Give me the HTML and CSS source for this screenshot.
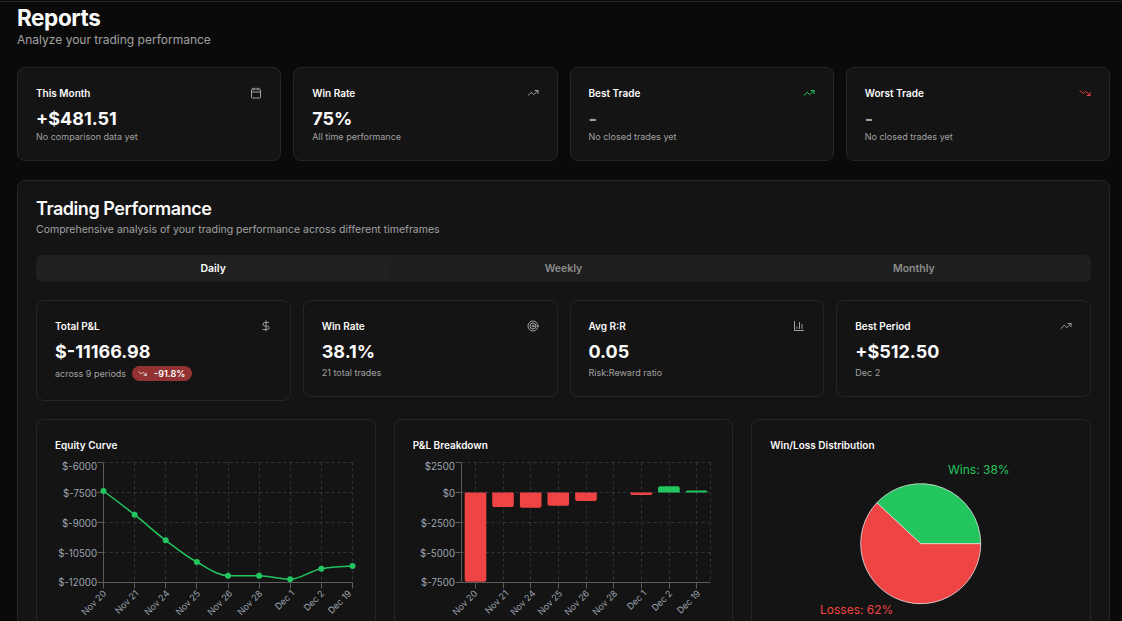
FILE: index.html
```html
<!DOCTYPE html>
<html lang="en">
<head>
<meta charset="utf-8">
<title>Reports</title>
<link rel="stylesheet" href="styles.css">
</head>
<body>
<div class="topline"></div>
<main class="page">
  <header class="head">
    <h1>Reports</h1>
    <p>Analyze your trading performance</p>
  </header>

  <section class="summary">
    <article class="stat">
      <div class="stat-top"><span class="stat-label">This Month</span>
        <svg class="ico muted" viewBox="0 0 24 24"><path d="M8 2v4M16 2v4"/><rect x="3" y="4" width="18" height="18" rx="2"/><path d="M3 10h18"/></svg></div>
      <div class="stat-value">+$481.51</div>
      <div class="stat-note">No comparison data yet</div>
    </article>
    <article class="stat">
      <div class="stat-top"><span class="stat-label">Win Rate</span>
        <svg class="ico muted" viewBox="0 0 24 24"><path d="M22 7l-8.5 8.5-5-5L2 17"/><path d="M16 7h6v6"/></svg></div>
      <div class="stat-value">75%</div>
      <div class="stat-note">All time performance</div>
    </article>
    <article class="stat">
      <div class="stat-top"><span class="stat-label">Best Trade</span>
        <svg class="ico up" viewBox="0 0 24 24"><path d="M22 7l-8.5 8.5-5-5L2 17"/><path d="M16 7h6v6"/></svg></div>
      <div class="stat-value dash">-</div>
      <div class="stat-note">No closed trades yet</div>
    </article>
    <article class="stat">
      <div class="stat-top"><span class="stat-label">Worst Trade</span>
        <svg class="ico down" viewBox="0 0 24 24"><path d="M22 17l-8.5-8.5-5 5L2 7"/><path d="M16 17h6v-6"/></svg></div>
      <div class="stat-value dash">-</div>
      <div class="stat-note">No closed trades yet</div>
    </article>
  </section>

  <section class="panel">
    <h2>Trading Performance</h2>
    <p class="panel-sub">Comprehensive analysis of your trading performance across different timeframes</p>

    <nav class="tabs">
      <span class="tab active">Daily</span>
      <span class="tab">Weekly</span>
      <span class="tab">Monthly</span>
    </nav>

    <div class="kpis">
      <article class="stat">
        <div class="stat-top"><span class="stat-label">Total P&amp;L</span>
          <svg class="ico muted" viewBox="0 0 24 24"><path d="M12 2v20"/><path d="M17 5H9.5a3.5 3.5 0 0 0 0 7h5a3.5 3.5 0 0 1 0 7H6"/></svg></div>
        <div class="stat-value">$-11166.98</div>
        <div class="stat-foot"><span class="stat-note">across 9 periods</span>
          <span class="badge"><svg class="ico-sm" viewBox="0 0 24 24"><path d="M22 17l-8.5-8.5-5 5L2 7"/><path d="M16 17h6v-6"/></svg>-91.8%</span></div>
      </article>
      <article class="stat">
        <div class="stat-top"><span class="stat-label">Win Rate</span>
          <svg class="ico muted" viewBox="0 0 24 24"><circle cx="12" cy="12" r="10"/><circle cx="12" cy="12" r="6"/><circle cx="12" cy="12" r="2"/></svg></div>
        <div class="stat-value">38.1%</div>
        <div class="stat-note">21 total trades</div>
      </article>
      <article class="stat">
        <div class="stat-top"><span class="stat-label">Avg R:R</span>
          <svg class="ico muted" viewBox="0 0 24 24"><path d="M3 3v18h18"/><path d="M18 17V9M13 17V5M8 17v-3"/></svg></div>
        <div class="stat-value">0.05</div>
        <div class="stat-note">Risk:Reward ratio</div>
      </article>
      <article class="stat">
        <div class="stat-top"><span class="stat-label">Best Period</span>
          <svg class="ico muted" viewBox="0 0 24 24"><path d="M22 7l-8.5 8.5-5-5L2 17"/><path d="M16 7h6v6"/></svg></div>
        <div class="stat-value">+$512.50</div>
        <div class="stat-note">Dec 2</div>
      </article>
    </div>

    <div class="charts">
      <article class="chart-card">
        <h3>Equity Curve</h3>
        <svg class="chart" viewBox="0 0 340 165">
          <g class="grid" transform="translate(-36 -439)">
            <path d="M103.5 462.5H352.5M103.5 492.5H352.5M103.5 522.5H352.5M103.5 552.5H352.5"/>
            <path d="M134.5 462.5V582.5M165.5 462.5V582.5M196.5 462.5V582.5M228.5 462.5V582.5M259.5 462.5V582.5M290.5 462.5V582.5M321.5 462.5V582.5M352.5 462.5V582.5"/>
          </g>
          <g class="axis" transform="translate(-36 -439)">
            <path d="M103.5 462.5V582.5H352.5"/>
            <path d="M97.5 462.5H103.5M97.5 492.5H103.5M97.5 522.5H103.5M97.5 552.5H103.5M97.5 582.5H103.5"/>
            <path d="M103.5 582.5V588.5M134.5 582.5V588.5M165.5 582.5V588.5M196.5 582.5V588.5M228.5 582.5V588.5M259.5 582.5V588.5M290.5 582.5V588.5M321.5 582.5V588.5M352.5 582.5V588.5"/>
          </g>
          <g class="ytick" transform="translate(-36 -439)">
            <text x="97" y="470">$-6000</text>
            <text x="97" y="497">$-7500</text>
            <text x="97" y="527">$-9000</text>
            <text x="97" y="557">$-10500</text>
            <text x="97" y="586">$-12000</text>
          </g>
          <g class="xtick" transform="translate(-36 -439)">
            <text transform="translate(107 594) rotate(-45)">Nov 20</text>
            <text transform="translate(139 594) rotate(-45)">Nov 21</text>
            <text transform="translate(170 594) rotate(-45)">Nov 24</text>
            <text transform="translate(201 594) rotate(-45)">Nov 25</text>
            <text transform="translate(233 594) rotate(-45)">Nov 26</text>
            <text transform="translate(263 594) rotate(-45)">Nov 28</text>
            <text transform="translate(295 594) rotate(-45)">Dec 1</text>
            <text transform="translate(325 594) rotate(-45)">Dec 2</text>
            <text transform="translate(352 594) rotate(-45)">Dec 19</text>
          </g>
          <g transform="translate(-36 -439)">
            <path class="line" d="M103.5 491C113.9 498.7 124.2 506.5 134.6 514.7C145 522.9 155.3 532.5 165.7 540.3C176 548.1 186.5 556.4 196.9 562C207.3 567.6 217.6 575.7 228 575.7C238.4 575.7 248.7 575.7 259.1 575.7C269.5 575.7 279.8 579.3 290.2 579.3C300.6 579.3 311 570.2 321.4 568.7C331.8 567.2 342.1 566.5 352.5 566"/>
            <g class="dots">
              <circle cx="103.5" cy="491" r="3"/><circle cx="134.6" cy="514.7" r="3"/><circle cx="165.7" cy="540.3" r="3"/>
              <circle cx="196.9" cy="562" r="3"/><circle cx="228" cy="575.7" r="3"/><circle cx="259.1" cy="575.7" r="3"/>
              <circle cx="290.2" cy="579.3" r="3"/><circle cx="321.4" cy="568.7" r="3"/><circle cx="352.5" cy="566" r="3"/>
            </g>
          </g>
        </svg>
      </article>

      <article class="chart-card">
        <h3>P&amp;L Breakdown</h3>
        <svg class="chart" viewBox="0 0 340 165">
          <g class="grid" transform="translate(-394 -439)">
            <path d="M461.5 462.5H710.5M461.5 492.5H710.5M461.5 522.5H710.5M461.5 552.5H710.5"/>
            <path d="M475.5 462.5V582.5M503.5 462.5V582.5M530.5 462.5V582.5M558.5 462.5V582.5M586.5 462.5V582.5M613.5 462.5V582.5M641.5 462.5V582.5M669.5 462.5V582.5M696.5 462.5V582.5M710.5 462.5V582.5"/>
          </g>
          <g transform="translate(-394 -439)">
            <path class="bar-neg" d="M464.7 492.5h21.6v87.2a2 2 0 0 1-2 2h-17.6a2 2 0 0 1-2-2z"/>
            <path class="bar-neg" d="M492.2 492.5h21.6v12.5a2 2 0 0 1-2 2h-17.6a2 2 0 0 1-2-2z"/>
            <path class="bar-neg" d="M519.9 492.5h21.6v13.2a2 2 0 0 1-2 2h-17.6a2 2 0 0 1-2-2z"/>
            <path class="bar-neg" d="M547.5 492.5h21.6v11.2a2 2 0 0 1-2 2h-17.6a2 2 0 0 1-2-2z"/>
            <path class="bar-neg" d="M575.2 492.5h21.6v6.5a2 2 0 0 1-2 2h-17.6a2 2 0 0 1-2-2z"/>
            <path class="bar-neg" d="M630.5 492.5h21.6v1a1.5 1.5 0 0 1-1.5 1.5h-18.6a1.5 1.5 0 0 1-1.5-1.5z"/>
            <path class="bar-pos" d="M658.1 492.5h21.6v-4.2a2 2 0 0 0-2-2h-17.6a2 2 0 0 0-2 2z"/>
            <path class="bar-pos" d="M685.8 492.5h21.6v-.5a1.5 1.5 0 0 0-1.5-1.5h-18.6a1.5 1.5 0 0 0-1.5 1.5z"/>
          </g>
          <g class="axis" transform="translate(-394 -439)">
            <path d="M461.5 462.5V582.5H710.5"/>
            <path d="M455.5 462.5H461.5M455.5 492.5H461.5M455.5 522.5H461.5M455.5 552.5H461.5M455.5 582.5H461.5"/>
            <path d="M475.5 582.5V588.5M503.5 582.5V588.5M530.5 582.5V588.5M558.5 582.5V588.5M586.5 582.5V588.5M613.5 582.5V588.5M641.5 582.5V588.5M669.5 582.5V588.5M696.5 582.5V588.5"/>
          </g>
          <g class="ytick" transform="translate(-394 -439)">
            <text x="455" y="470">$2500</text>
            <text x="455" y="497">$0</text>
            <text x="455" y="527">$-2500</text>
            <text x="455" y="557">$-5000</text>
            <text x="455" y="586">$-7500</text>
          </g>
          <g class="xtick" transform="translate(-394 -439)">
            <text transform="translate(478 594) rotate(-45)">Nov 20</text>
            <text transform="translate(509 594) rotate(-45)">Nov 21</text>
            <text transform="translate(536 594) rotate(-45)">Nov 24</text>
            <text transform="translate(563 594) rotate(-45)">Nov 25</text>
            <text transform="translate(590 594) rotate(-45)">Nov 26</text>
            <text transform="translate(618 594) rotate(-45)">Nov 28</text>
            <text transform="translate(647 594) rotate(-45)">Dec 1</text>
            <text transform="translate(673 594) rotate(-45)">Dec 2</text>
            <text transform="translate(701 594) rotate(-45)">Dec 19</text>
          </g>
        </svg>
      </article>

      <article class="chart-card">
        <h3>Win/Loss Distribution</h3>
        <svg class="chart" viewBox="0 0 340 165">
          <g transform="translate(-751 -439)">
            <path class="slice-win" d="M920.7 543.7H980.7A60 60 0 0 0 876.8 502.8Z"/>
            <path class="slice-loss" d="M920.7 543.7L876.8 502.8A60 60 0 1 0 980.7 543.7Z"/>
            <text class="pie-win" x="948" y="474">Wins: 38%</text>
            <text class="pie-loss" x="820" y="614">Losses: 62%</text>
          </g>
        </svg>
      </article>
    </div>
  </section>
</main>
</body>
</html>
```
FILE: styles.css
```css
* { box-sizing: border-box; }
html, body { margin: 0; height: 621px; overflow: hidden; }
body {
  background: #0a0a0a;
  color: #fafafa;
  font-family: Inter, "Liberation Sans", sans-serif;
}
.topline { height: 1px; margin-top: 1px; background: #262626; }
.page { padding: 0 12px 0 17px; }
.head { height: 65px; padding-top: 4px; }
h1 { margin: 0; font-size: 22.5px; line-height: 24px; font-weight: 700; letter-spacing: -0.4px; }
.head p { margin: 2px 0 0; font-size: 12px; line-height: 16px; color: #a1a1a1; }

.summary { display: grid; grid-template-columns: repeat(4, 1fr); gap: 12px; }
.stat {
  background: #141414;
  border: 1px solid #262626;
  border-radius: 8px;
  padding: 17px 18px;
  height: 94px;
}
.stat-top { display: flex; justify-content: space-between; align-items: center; height: 16px; }
.stat-label { font-size: 10px; line-height: 14px; font-weight: 600; }
.ico { width: 12px; height: 12px; fill: none; stroke: currentColor; stroke-width: 2; stroke-linecap: round; stroke-linejoin: round; flex: none; }
.muted { color: #a1a1a1; }
.up { color: #22c55e; }
.down { color: #ef4444; }
.stat-value { margin-top: 6px; font-size: 18px; line-height: 23px; font-weight: 700; }
.dash { color: #a1a1a1; }
.stat-note { font-size: 9px; line-height: 13px; color: #a1a1a1; }

.panel {
  margin-top: 19px;
  background: #141414;
  border: 1px solid #262626;
  border-radius: 8px;
  padding: 18px 18px 18px;
  height: 470px;
}
h2 { margin: 0; font-size: 18px; line-height: 20px; font-weight: 600; letter-spacing: -0.45px; }
.panel-sub { margin: 3px 0 0; font-size: 10.5px; line-height: 16px; color: #a1a1a1; }

.tabs {
  margin-top: 17px;
  height: 27px;
  padding: 2px;
  display: grid;
  grid-template-columns: repeat(3, 1fr);
  background: #1f1f1f;
  border-radius: 6px;
}
.tab { display: flex; align-items: center; justify-content: center; font-size: 10.5px; font-weight: 600; color: #8c8c8c; }
.tab.active { background: #212121; color: #fafafa; border-radius: 6px; }

.kpis { margin-top: 18px; display: grid; grid-template-columns: repeat(4, 1fr); gap: 12px; align-items: start; }
.kpis .stat { background: #141414; height: 97px; }
.kpis .stat:first-child { height: 101px; }
.kpis .stat-value { margin-top: 6px; line-height: 24px; }
.kpis .stat-value + .stat-note { margin-top: 2px; }
.stat-foot { display: flex; align-items: center; gap: 6px; margin-top: 2px; }
.badge {
  display: inline-flex; align-items: center; gap: 7px;
  height: 15px; padding: 0 7px 0 6px;
  border-radius: 8px;
  background: #933232;
  font-size: 9px; font-weight: 600; color: #fafafa;
}
.ico-sm { width: 9px; height: 9px; fill: none; stroke: currentColor; stroke-width: 2; stroke-linecap: round; stroke-linejoin: round; }

.charts { margin-top: 18px; display: grid; grid-template-columns: repeat(3, 1fr); gap: 18px; }
.chart-card {
  background: #141414;
  border: 1px solid #262626;
  border-radius: 8px;
  height: 260px;
  padding: 18px 18px 0;
  position: relative;
}
h3 { margin: 0; font-size: 10px; line-height: 14px; font-weight: 600; }
.chart { position: absolute; left: -1px; top: 19px; width: 340px; height: 165px; overflow: visible; }
.chart text { font-family: Inter, "Liberation Sans", sans-serif; }
.grid path { fill: none; stroke: #2e3440; stroke-width: 1; stroke-dasharray: 3 3; }
.axis path { fill: none; stroke: #5c5c5c; stroke-width: 1; }
.ytick text { font-size: 9.7px; fill: #9ca3af; text-anchor: end; }
.xtick text { font-size: 9px; fill: #9ca3af; text-anchor: end; }
.line { fill: none; stroke: #22c55e; stroke-width: 1.5; }
.dots circle { fill: #22c55e; }
.bar-neg { fill: #ef4444; }
.bar-pos { fill: #22c55e; }
.slice-win { fill: #22c55e; stroke: #e5e5e5; stroke-width: 0.8; }
.slice-loss { fill: #ef4444; stroke: #e5e5e5; stroke-width: 0.8; }
.pie-win { font-size: 12px; fill: #22c55e; }
.pie-loss { font-size: 12px; fill: #ef4444; }
```
